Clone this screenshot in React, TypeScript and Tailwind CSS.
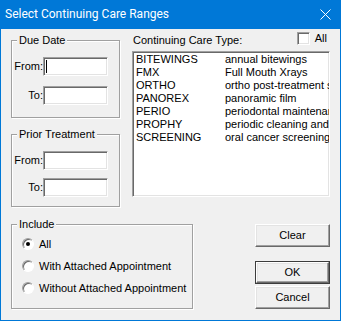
import React from 'react'

const font = "font-['Liberation_Sans',Arial,sans-serif] text-[11px] leading-[13px] text-black"
const sunken =
  'border border-t-[#a0a0a0] border-l-[#a0a0a0] border-r-white border-b-white bg-white shadow-[inset_1px_1px_0_#696969,inset_-1px_-1px_0_#e3e3e3]'
const raised =
  'border border-t-white border-l-white border-r-[#696969] border-b-[#696969] bg-[#f0f0f0] shadow-[inset_-1px_-1px_0_#a0a0a0,inset_1px_1px_0_#e3e3e3]'
const etched = 'border border-[#a0a0a0] shadow-[inset_1px_1px_0_#fff,1px_1px_0_#fff]'

const careTypes = [
  ['BITEWINGS', 'annual bitewings'],
  ['FMX', 'Full Mouth Xrays'],
  ['ORTHO', 'ortho post-treatment study models'],
  ['PANOREX', 'panoramic film'],
  ['PERIO', 'periodontal maintenance'],
  ['PROPHY', 'periodic cleaning and exam'],
  ['SCREENING', 'oral cancer screening'],
]

function Legend({ children }: { children: React.ReactNode }) {
  return <div className="ml-[5px] -mt-[7px] w-fit bg-[#f0f0f0] px-[2px]">{children}</div>
}

function Field({ label, caret, className }: { label: string; caret?: boolean; className?: string }) {
  return (
    <div className={`grid grid-cols-[31px_65px] items-center ${className ?? ''}`}>
      <span className="text-right">{label}</span>
      <div className={`h-[19px] ${sunken} flex items-center pl-[2px]`}>
        {caret && <span className="block h-[13px] w-[1px] bg-black" />}
      </div>
    </div>
  )
}

function Radio({ label, checked }: { label: string; checked?: boolean }) {
  return (
    <div className="flex h-[22px] items-center gap-[5px] pl-[10px]">
      <span className="flex h-[12px] w-[12px] items-center justify-center rounded-full border border-t-[#a0a0a0] border-l-[#a0a0a0] border-r-white border-b-white bg-white shadow-[inset_1px_1px_0_#696969]">
        {checked && <span className="block h-[4px] w-[4px] rounded-full bg-black" />}
      </span>
      <span>{label}</span>
    </div>
  )
}

function Button({ label, isDefault }: { label: string; isDefault?: boolean }) {
  if (isDefault) {
    return (
      <div className="h-[23px] w-[75px] border border-[#3c3c3c]">
        <div className={`flex h-full w-full items-center justify-center ${raised}`}>{label}</div>
      </div>
    )
  }
  return <div className={`flex h-[23px] w-[75px] items-center justify-center ${raised}`}>{label}</div>
}

export default function App() {
  return (
    <div className={`flex h-[321px] w-[341px] flex-col border-x border-b border-[#0078d7] bg-[#f0f0f0] ${font}`}>
      {/* Title bar */}
      <div className="-mx-[1px] flex h-[29px] shrink-0 items-center justify-between bg-[#0078d7] pl-[5px] pr-[10px] font-['Roboto',sans-serif] text-[12px] text-white">
        <span>Select Continuing Care Ranges</span>
        <svg width="11" height="11" viewBox="0 0 11 11" className="mt-[-1px]">
          <path d="M0.5 0.5 L10.5 10.5 M10.5 0.5 L0.5 10.5" stroke="white" strokeWidth="1" />
        </svg>
      </div>

      <div className="flex flex-col px-[10px] pt-[3px]">
        <div className="flex gap-[12px]">
          {/* Left column */}
          <div className="flex w-[109px] flex-col pt-[8px]">
            <div className={`h-[78px] ${etched}`}>
              <Legend>Due Date</Legend>
              <Field label="From:" caret className="mt-[10px]" />
              <Field label="To:" className="mt-[10px]" />
            </div>
            <div className={`mt-[16px] h-[73px] ${etched}`}>
              <Legend>Prior Treatment</Legend>
              <Field label="From:" className="mt-[10px]" />
              <Field label="To:" className="mt-[8px]" />
            </div>
          </div>

          {/* Right column */}
          <div className="flex flex-1 flex-col">
            <div className="flex h-[19px] items-start justify-between pr-[3px]">
              <span className="pt-[2px] pl-[1px]">Continuing Care Type:</span>
              <div className="flex items-start gap-[5px]">
                <span className={`block h-[13px] w-[13px] ${sunken}`} />
                <span>All</span>
              </div>
            </div>
            <div className={`h-[146px] w-[198px] overflow-hidden ${sunken} pl-[3px] pt-[1px]`}>
              {careTypes.map(([code, desc]) => (
                <div key={code} className="flex whitespace-nowrap">
                  <span className="w-[89px] shrink-0">{code}</span>
                  <span>{desc}</span>
                </div>
              ))}
            </div>
          </div>
        </div>

        <div className="mt-[17px] flex justify-between">
          <div className={`h-[85px] w-[182px] ${etched}`}>
            <Legend>Include</Legend>
            <div className="mt-[2px]">
              <Radio label="All" checked />
              <Radio label="With Attached Appointment" />
              <Radio label="Without Attached Appointment" />
            </div>
          </div>
          <div className="flex flex-col">
            <Button label="Clear" />
            <div className="mt-[14px]">
              <Button label="OK" isDefault />
            </div>
            <div className="mt-[2px]">
              <Button label="Cancel" />
            </div>
          </div>
        </div>
      </div>
    </div>
  )
}
